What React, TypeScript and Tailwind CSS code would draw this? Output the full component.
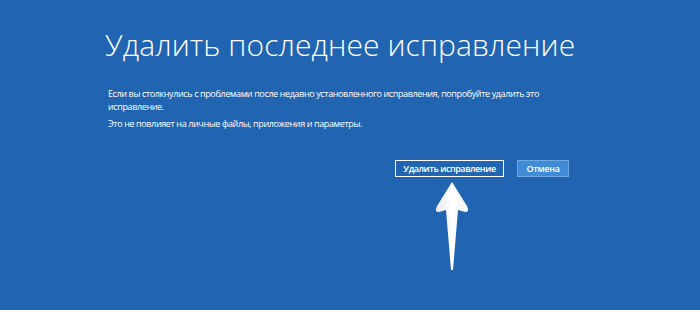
import React from "react";

export default function App() {
  return (
    <div className="relative w-[700px] h-[310px] bg-[#2064b2] overflow-hidden" style={{ fontFamily: '"Open Sans", "Noto Sans", sans-serif' }}>
      <div className="ml-[105px] w-[464px] pt-[26px] flex flex-col">
        <h1 className="text-[30px] leading-[38px] font-light text-white whitespace-nowrap tracking-[0.1px]">Удалить последнее исправление</h1>
        <div className="mt-[23px] ml-[3px] text-[9px] leading-[13px] text-white tracking-[-0.38px]">
          <p>Если вы столкнулись с проблемами после недавно установленного исправления, попробуйте удалить это исправление.</p>
          <p className="mt-[4px]">Это не повлияет на личные файлы, приложения и параметры.</p>
        </div>
        <div className="mt-[30px] flex justify-end gap-[13px]">
          <button className="h-[17px] w-[109px] border border-white bg-[#2064b2] text-white text-[9px] font-semibold leading-none tracking-[-0.45px]">Удалить исправление</button>
          <button className="h-[17px] w-[52px] border border-[#6ea9e2] bg-[#3f8bd6] text-white text-[9px] font-semibold leading-none tracking-[-0.3px]">Отмена</button>
        </div>
      </div>
      <svg className="absolute left-0 top-0" width="700" height="310" viewBox="0 0 700 310">
        <defs>
          <linearGradient id="ag" x1="0" x2="1" y1="0" y2="0">
            <stop offset="0" stopColor="#e6e9ee" />
            <stop offset="0.5" stopColor="#ffffff" />
            <stop offset="1" stopColor="#f2f4f7" />
          </linearGradient>
        </defs>
        <path d="M452 182 L467 206 Q470 212 465 212 L458 210 L453 270 L451 270 L446 210 L439 212 Q434 212 437 206 Z" fill="url(#ag)" />
      </svg>
    </div>
  );
}
